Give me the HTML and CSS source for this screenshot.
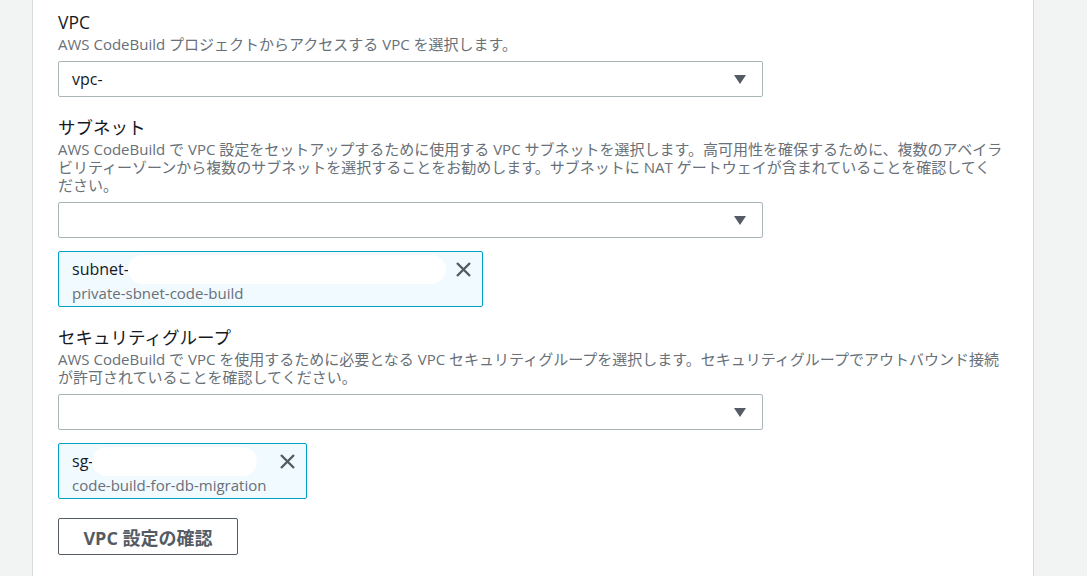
FILE: index.html
```html
<!DOCTYPE html>
<html lang="ja">
<head>
    <meta charset="UTF-8">
    <meta name="viewport" content="width=device-width, initial-scale=1.0">
    <title>VPC 設定</title>
    <link rel="stylesheet" href="styles.css">
</head>
<body>
    <div class="page">
        <div class="card">
            <div class="field">
                <div class="label">VPC</div>
                <div class="desc">AWS CodeBuild プロジェクトからアクセスする VPC を選択します。</div>
                <div class="select">
                    <span class="value">vpc-</span>
                    <span class="arrow"></span>
                </div>
            </div>

            <div class="field">
                <div class="label">サブネット</div>
                <div class="desc">AWS CodeBuild で VPC 設定をセットアップするために使用する VPC サブネットを選択します。高可用性を確保するために、複数のアベイラビリティーゾーンから複数のサブネットを選択することをお勧めします。サブネットに NAT ゲートウェイが含まれていることを確認してください。</div>
                <div class="select">
                    <span class="value"></span>
                    <span class="arrow"></span>
                </div>
                <div class="token" style="width: 400px">
                    <div class="token-top">
                        <span class="token-id">subnet-</span>
                        <span class="hidden-id" style="width: 318px"></span>
                        <svg class="remove" width="17" height="17" viewBox="0 0 17 17">
                            <path d="M2 2 L15 15 M15 2 L2 15" stroke="#545b64" stroke-width="2.4" fill="none"/>
                        </svg>
                    </div>
                    <div class="token-name">private-sbnet-code-build</div>
                </div>
            </div>

            <div class="field">
                <div class="label">セキュリティグループ</div>
                <div class="desc">AWS CodeBuild で VPC を使用するために必要となる VPC セキュリティグループを選択します。セキュリティグループでアウトバウンド接続が許可されていることを確認してください。</div>
                <div class="select">
                    <span class="value"></span>
                    <span class="arrow"></span>
                </div>
                <div class="token" style="width: 224px">
                    <div class="token-top">
                        <span class="token-id">sg-</span>
                        <span class="hidden-id" style="width: 165px"></span>
                        <svg class="remove" width="17" height="17" viewBox="0 0 17 17">
                            <path d="M2 2 L15 15 M15 2 L2 15" stroke="#545b64" stroke-width="2.4" fill="none"/>
                        </svg>
                    </div>
                    <div class="token-name">code-build-for-db-migration</div>
                </div>
            </div>

            <button class="btn">VPC 設定の確認</button>
        </div>
    </div>
</body>
</html>
```

FILE: styles.css
```css
body{
    margin: 0;
    background-color: #f2f3f3;
    font-family: "Open Sans", "Noto Sans CJK JP", sans-serif;
    color: #16191f;
}

.page{
    padding-left: 32px;
    width: 1002px;
    height: 576px;
    overflow: hidden;
}

.card{
    background-color: #fff;
    border-left: 1px solid #d5dbdb;
    border-right: 1px solid #d5dbdb;
    padding: 10px 29px 40px 25px;
    min-height: 600px;
}

.field{
    margin-bottom: 18px;
}

.label{
    font-size: 17.5px;
    line-height: 24px;
}

.desc{
    font-size: 15px;
    line-height: 18px;
    color: #687078;
    margin-top: 1px;
    margin-bottom: 8px;
}

.select{
    width: 705px;
    height: 36px;
    box-sizing: border-box;
    border: 1px solid #aab7b8;
    border-radius: 2px;
    display: flex;
    align-items: center;
    padding: 0 16px 0 13px;
}

.value{
    flex: 1;
    font-size: 16px;
}

.arrow{
    width: 0;
    height: 0;
    border-left: 6px solid transparent;
    border-right: 6px solid transparent;
    border-top: 9px solid #545b64;
}

.token{
    display: inline-block;
    margin-top: 13px;
    border: 1px solid #00a1c9;
    border-radius: 2px;
    background-color: #f1faff;
    padding: 2px 10px 4px 13px;
}

.token-top{
    display: flex;
    align-items: center;
    height: 30px;
}

.token-id{
    font-size: 16px;
}

.hidden-id{
    height: 29px;
    background-color: #fff;
    border-radius: 15px;
    margin-left: -1px;
}

.remove{
    margin-left: auto;
}

.token-name{
    font-size: 15px;
    line-height: 18px;
    color: #687078;
}

.btn{
    margin-top: 1px;
    width: 180px;
    height: 37px;
    background-color: #fff;
    border: 1px solid #545b64;
    border-radius: 2px;
    font-family: "Open Sans", "Noto Sans CJK JP", sans-serif;
    font-size: 18px;
    font-weight: bold;
    color: #545b64;
}
```
